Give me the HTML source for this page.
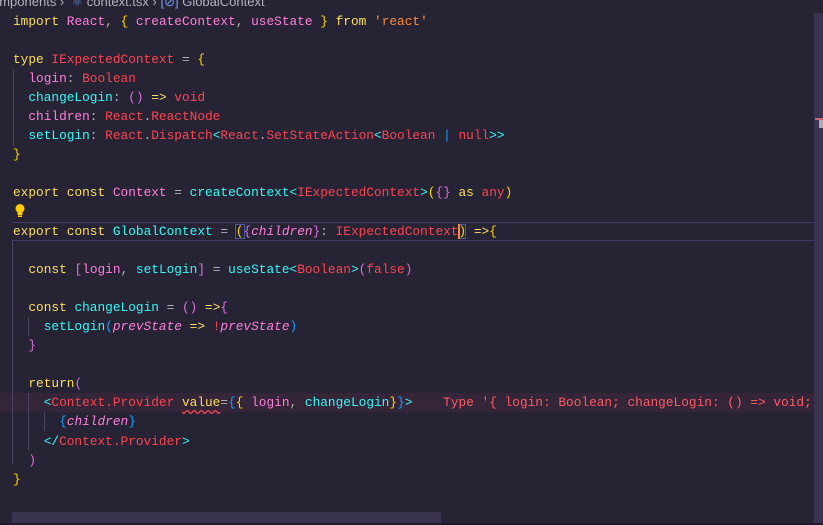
<!DOCTYPE html>
<html><head><meta charset="utf-8"><style>
html,body{margin:0;padding:0;}
body{width:823px;height:525px;background:#262335;overflow:hidden;position:relative;font-family:"Liberation Mono",monospace;}
.code{position:absolute;left:13px;top:11.5px;font-size:12.8px;line-height:19.1px;white-space:normal;color:#b6b1b1;}
.l{height:19.1px;white-space:pre;}
.k{color:#fede5d}.v{color:#ff7edb}.f{color:#36f9f6}.t{color:#fe4450}.s{color:#ff8b39}
.y{color:#ffd700}.p{color:#da70d6}.b{color:#179fff}.i{font-style:italic}
.bc{position:absolute;top:-6px;left:-8px;font-family:"Liberation Sans",sans-serif;font-size:13px;color:#b6b1c4;white-space:pre;}
.g{position:absolute;width:1px;background:#4a4560;}
</style></head><body>
<div class="bc">omponents ›  <span style="color:#6a8ad8">⚛</span> context.tsx › <span style="color:#7a9cf0">[⊘]</span> GlobalContext</div>
<div style="position:absolute;left:12px;right:9px;top:222px;height:17px;border-top:1px solid #463a66;border-bottom:1px solid #463a66;"></div>
<div style="position:absolute;left:0;right:0;top:393px;height:19px;background:#352538;"></div>
<div style="position:absolute;left:235px;top:224px;width:10px;height:15px;border:1px solid #4e5a9a;box-sizing:border-box"></div>
<div style="position:absolute;left:458px;top:224px;width:8px;height:15px;border:1px solid #4e5a9a;box-sizing:border-box"></div>
<div style="position:absolute;left:458px;top:224px;width:2px;height:15px;background:#ff8b39"></div>
<div class="g" style="left:13px;top:70px;height:76px"></div>
<div class="g" style="left:12px;top:241px;height:223px"></div>
<div class="g" style="left:28px;top:317px;height:19px"></div>
<div class="g" style="left:28px;top:393px;height:57px"></div>
<div class="g" style="left:44px;top:412px;height:19px"></div>
<svg style="position:absolute;left:14px;top:203px" width="12" height="15" viewBox="0 0 12 15"><circle cx="6" cy="5.5" r="4.5" fill="#ffcc00"/><rect x="3.5" y="8" width="5" height="4" fill="#ffcc00"/><rect x="4" y="12.5" width="4" height="1.5" fill="#ffcc00"/></svg>
<div class="code">
<div class="l"><span class="k">import</span> <span class="v">React</span>, <span class="y">{</span> <span class="v">createContext</span>, <span class="v">useState</span> <span class="y">}</span> <span class="k">from</span> <span class="s">'react'</span></div>
<div class="l"> </div>
<div class="l"><span class="k">type</span> <span class="t">IExpectedContext</span> = <span class="y">{</span></div>
<div class="l">  <span class="v">login</span>: <span class="t">Boolean</span></div>
<div class="l">  <span class="f">changeLogin</span>: <span class="p">()</span> <span class="k">=&gt;</span> <span class="t">void</span></div>
<div class="l">  <span class="v">children</span>: <span class="t">React</span>.<span class="t">ReactNode</span></div>
<div class="l">  <span class="f">setLogin</span>: <span class="t">React</span>.<span class="t">Dispatch</span><span class="f">&lt;</span><span class="t">React</span>.<span class="t">SetStateAction</span><span class="f">&lt;</span><span class="t">Boolean</span> <span class="b">|</span> <span class="t">null</span><span class="f">&gt;&gt;</span></div>
<div class="l"><span class="y">}</span></div>
<div class="l"> </div>
<div class="l"><span class="k">export</span> <span class="k">const</span> <span class="v">Context</span> = <span class="f">createContext</span><span class="f">&lt;</span><span class="t">IExpectedContext</span><span class="f">&gt;</span><span class="y">(</span><span class="p">{}</span> <span class="k">as</span> <span class="t">any</span><span class="y">)</span></div>
<div class="l"> </div>
<div class="l"><span class="k">export</span> <span class="k">const</span> <span class="f">GlobalContext</span> = <span class="y">(</span><span class="p">{</span><span class="v i">children</span><span class="p">}</span>: <span class="t">IExpectedContext</span><span class="y">)</span> <span class="k">=&gt;</span><span class="y">{</span></div>
<div class="l"> </div>
<div class="l">  <span class="k">const</span> <span class="p">[</span><span class="v">login</span>, <span class="f">setLogin</span><span class="p">]</span> = <span class="f">useState</span><span class="f">&lt;</span><span class="t">Boolean</span><span class="f">&gt;</span><span class="p">(</span><span class="t">false</span><span class="p">)</span></div>
<div class="l"> </div>
<div class="l">  <span class="k">const</span> <span class="f">changeLogin</span> = <span class="p">()</span> <span class="k">=&gt;</span><span class="p">{</span></div>
<div class="l">    <span class="f">setLogin</span><span class="b">(</span><span class="v i">prevState</span> <span class="k">=&gt;</span> <span class="t">!</span><span class="v i">prevState</span><span class="b">)</span></div>
<div class="l">  <span class="p">}</span></div>
<div class="l"> </div>
<div class="l">  <span class="k">return</span><span class="p">(</span></div>
<div class="l">    <span class="f">&lt;</span><span class="t">Context.Provider</span> <span class="k" style="text-decoration:underline wavy #fe4450;text-underline-offset:3px">value</span>=<span class="b">{</span><span class="y">{</span> <span class="v">login</span>, <span class="f">changeLogin</span><span class="y">}</span><span class="b">}</span><span class="f">&gt;</span>    <span style="color:#fe5b66">Type '{ login: Boolean; changeLogin: () =&gt; void; }</span></div>
<div class="l">      <span class="b">{</span><span class="v i">children</span><span class="b">}</span></div>
<div class="l">    <span class="f">&lt;/</span><span class="t">Context.Provider</span><span class="f">&gt;</span></div>
<div class="l">  <span class="p">)</span></div>
<div class="l"><span class="y">}</span></div>
</div>
<div style="position:absolute;left:814px;top:13px;width:9px;height:512px;background:#3a3450"></div>
<div style="position:absolute;left:815px;top:118px;width:8px;height:2px;background:#d06070"></div>
<div style="position:absolute;left:819px;top:120px;width:4px;height:8px;background:#b0aab8"></div>
<div style="position:absolute;left:12px;top:512px;width:429px;height:11px;background:#3b3450"></div>
<div style="position:absolute;left:0;top:523px;width:823px;height:2px;background:#1e1b2a"></div>
</body></html>
